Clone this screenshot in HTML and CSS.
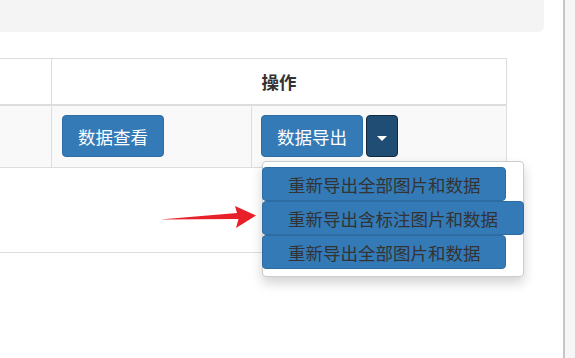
FILE: index.html
```html
<!DOCTYPE html>
<html lang="zh-CN">
<head>
  <meta charset="UTF-8">
  <title>数据导出</title>
  <link rel="stylesheet" href="styles.css">
</head>
<body>
  <div class="page">
    <div class="main">
      <div class="panel"></div>

      <table class="list">
        <thead>
          <tr>
            <th class="col-first"></th>
            <th colspan="2">操作</th>
          </tr>
        </thead>
        <tbody>
          <tr>
            <td class="col-first"></td>
            <td class="col-view"><button class="btn">数据查看</button></td>
            <td class="col-export">
              <div class="btn-group">
                <button class="btn">数据导出</button>
                <button class="btn btn-caret"><span class="caret"></span></button>
                <div class="menu">
                  <button class="item">重新导出全部图片和数据</button>
                  <button class="item item-wide">重新导出含标注图片和数据</button>
                  <button class="item">重新导出全部图片和数据</button>
                </div>
              </div>
            </td>
          </tr>
        </tbody>
      </table>

      <div class="empty-row"></div>

      <svg class="arrow" width="110" height="40" viewBox="150 200 110 40">
        <path d="M160 219.5 L237 213 L235 206 L256 215.5 L236 228 L238.5 219 Z" fill="#e8202a"/>
      </svg>
    </div>
    <div class="edge"></div>
  </div>
</body>
</html>
```

FILE: styles.css
```css
body {
  margin: 0;
  font-family: "Noto Sans CJK SC", "Noto Sans", sans-serif;
  color: #333;
  background: #fff;
}
.page {
  display: flex;
  height: 358px;
  overflow: hidden;
}
.main {
  position: relative;
  width: 563px;
}
.edge {
  flex: 1;
  border-left: 2px solid #c6c6c6;
  background: #f6f6f6;
}
.panel {
  width: 544px;
  height: 32px;
  background: #f4f4f4;
  border-bottom-right-radius: 6px;
}

.list {
  margin-top: 26px;
  margin-left: -10px;
  width: 517px;
  border-collapse: collapse;
  border: 1px solid #ddd;
}
.list th,
.list td {
  border: 1px solid #ddd;
  padding: 0;
}
.list th {
  height: 45px;
  font-size: 17.5px;
  font-weight: bold;
  text-align: center;
  border-bottom: 2px solid #ddd;
}
.list td {
  height: 42px;
  padding: 9px 10px 10px;
  background: #f9f9f9;
}
.list td.col-export {
  padding-left: 9px;
}
.col-first {
  width: 40px;
}
.col-view {
  width: 179px;
}

.btn {
  height: 42px;
  padding: 0 15px;
  font-family: inherit;
  font-size: 17.5px;
  color: #fff;
  background: #337ab7;
  border: 1px solid #2e6da4;
  border-radius: 4px;
  vertical-align: top;
}
.btn-group {
  position: relative;
  display: flex;
  gap: 3px;
}
.btn-caret {
  width: 32px;
  padding: 0;
  background: #204d74;
  border-color: #122b40;
}
.caret {
  display: inline-block;
  border-top: 5px solid #fff;
  border-left: 5px solid transparent;
  border-right: 5px solid transparent;
  vertical-align: middle;
}

.menu {
  position: absolute;
  top: 46px;
  left: 1px;
  width: 262px;
  height: 116px;
  box-sizing: border-box;
  padding: 5px 0 0;
  background: #fff;
  border: 1px solid #ccc;
  border-radius: 4px;
  box-shadow: 0 6px 12px rgba(0, 0, 0, 0.175);
}
.item {
  display: block;
  width: 244px;
  height: 34px;
  margin-left: -1px;
  padding: 0 0 0 25px;
  text-align: left;
  font-family: inherit;
  font-size: 17.5px;
  color: #333;
  background: #337ab7;
  border: 1px solid #2e6da4;
  border-radius: 4px;
}
.item-wide {
  width: 262px;
}

.empty-row {
  margin-left: -10px;
  width: 517px;
  height: 84px;
  border-bottom: 1px solid #ddd;
}
.arrow {
  position: absolute;
  left: 150px;
  top: 200px;
}
```
